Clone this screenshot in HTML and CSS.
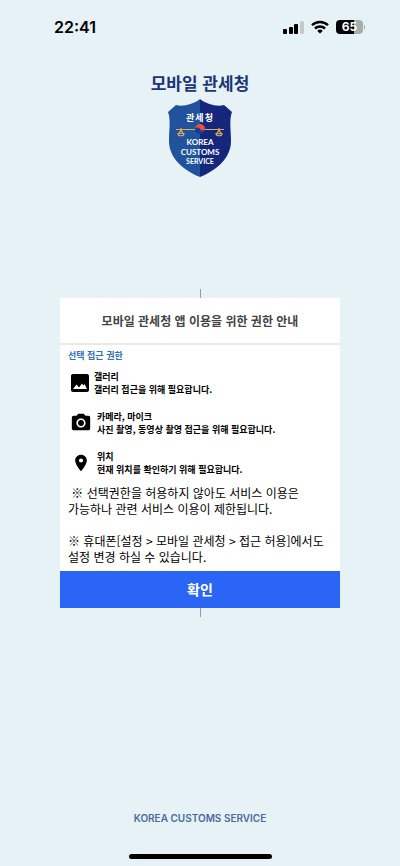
FILE: index.html
```
<!DOCTYPE html>
<html lang="ko">
<head>
  <meta charset="utf-8">
  <meta name="viewport" content="width=device-width, initial-scale=1">
  <title>모바일 관세청</title>
  <link rel="stylesheet" href="styles.css">
</head>
<body>
  <div class="status-bar">
    <span class="time">22:41</span>
    <div class="status-icons">
      <svg width="21" height="14" viewBox="0 0 21 14">
        <rect x="0" y="9" width="4" height="5" rx="1"/>
        <rect x="6" y="7" width="4" height="7" rx="1"/>
        <rect x="11" y="4" width="4" height="10" rx="1"/>
        <rect x="17" y="1" width="4" height="13" rx="1" fill="#c3cbcd"/>
      </svg>
      <svg width="18" height="14" viewBox="0 0 18 14">
        <g fill="none" stroke="#000" stroke-width="2.5">
          <path d="M1 5.2a11.6 11.6 0 0 1 16 0"/>
          <path d="M4 8.5a7.3 7.3 0 0 1 10 0"/>
        </g>
        <path d="M9 13.6 6.3 10.9a3.9 3.9 0 0 1 5.4 0z"/>
      </svg>
      <div class="battery">
        <span class="battery-level">65</span>
        <span class="battery-tip"></span>
      </div>
    </div>
  </div>

  <header class="brand">
    <h1 class="brand-name">모바일 관세청</h1>
    <svg class="emblem" width="64" height="78" viewBox="0 0 64 78">
      <path d="M32 0C26 5 15 8 8 6L0 13c3 8 1 17 1 29 0 17 14 29 31 36z" fill="#20539b"/>
      <path d="M32 0c6 5 17 8 24 6l8 7c-3 8-1 17-1 29 0 17-14 29-31 36z" fill="#14277d"/>
      <g fill="none" stroke="#e0aa5c" stroke-width="1.2">
        <path d="M8 30.500H56"/>
        <path d="M13 29v2l-2.500 4M13 31l2.500 4M51 29v2l-2.500 4M51 31l2.500 4"/>
      </g>
      <path d="M10 34.500h6c0 3-6 3-6 0zM48 34.500h6c0 3-6 3-6 0z" fill="#14408b" stroke="#e0aa5c" stroke-width="1.2"/>
      <circle cx="32" cy="30" r="5" fill="#173c91"/>
      <path d="M27 30a5 5 0 0 1 10 0c-1 2-4 2-5 0s-4-2-5 0z" fill="#ed5038"/>
      <g class="emblem-text">
        <text x="32" y="22" font-size="9" letter-spacing="1">관세청</text>
        <text x="32" y="46" font-size="8">KOREA</text>
        <text x="32" y="56" font-size="8">CUSTOMS</text>
        <text x="32" y="65" font-size="7">SERVICE</text>
      </g>
    </svg>
  </header>

  <main class="content">
    <section class="card">
      <h2 class="card-title">모바일 관세청 앱 이용을 위한 권한 안내</h2>
      <div class="card-body">
        <h3 class="section-title">선택 접근 권한</h3>
        <ul class="permissions">
          <li class="permission">
            <svg width="24" height="24" viewBox="0 0 24 24"><path d="M21 19V5c0-1.100-.9-2-2-2H5c-1.100 0-2 .9-2 2v14c0 1.100.9 2 2 2h14c1.100 0 2-.9 2-2zM5 18l3.500-4.500 2.500 3 3-4 1.500 2 1-1.500L19 18z"/></svg>
            <div>
              <strong>갤러리</strong>
              <p>갤러리 접근을 위해 필요합니다.</p>
            </div>
          </li>
          <li class="permission permission-wide">
            <svg width="22" height="22" viewBox="0 0 24 24"><circle cx="12" cy="12" r="3.200"/><path d="M9 2 7.170 4H4c-1.100 0-2 .9-2 2v12c0 1.100.9 2 2 2h16c1.100 0 2-.9 2-2V6c0-1.100-.9-2-2-2h-3.170L15 2H9zm3 15c-2.760 0-5-2.240-5-5s2.240-5 5-5 5 2.240 5 5-2.240 5-5 5z"/></svg>
            <div>
              <strong>카메라, 마이크</strong>
              <p>사진 촬영, 동영상 촬영 접근을 위해 필요합니다.</p>
            </div>
          </li>
          <li class="permission permission-wide">
            <svg width="20" height="20" viewBox="0 0 24 24"><path d="M12 2C8.130 2 5 5.130 5 9c0 5.250 7 13 7 13s7-7.750 7-13c0-3.870-3.130-7-7-7zm0 9.500a2.500 2.500 0 1 1 0-5 2.500 2.500 0 0 1 0 5z"/></svg>
            <div>
              <strong>위치</strong>
              <p>현재 위치를 확인하기 위해 필요합니다.</p>
            </div>
          </li>
        </ul>
        <div class="notes">
          <p>&nbsp;※ 선택권한을 허용하지 않아도 서비스 이용은<br>가능하나 관련 서비스 이용이 제한됩니다.</p>
          <p>※ 휴대폰[설정 &gt; 모바일 관세청 &gt; 접근 허용]에서도<br>설정 변경 하실 수 있습니다.</p>
        </div>
      </div>
      <button class="confirm" type="button">확인</button>
    </section>
  </main>

  <footer class="footer">
    <p class="footer-text">KOREA CUSTOMS SERVICE</p>
    <div class="home-bar"></div>
  </footer>
</body>
</html>
```
FILE: styles.css
```
* {
  box-sizing: border-box;
  margin: 0;
  padding: 0;
}

body {
  display: flex;
  flex-direction: column;
  min-height: 100vh;
  background: #e6f2f5;
  color: #000;
  font-family: "Noto Sans CJK KR", sans-serif;
}

.status-bar {
  display: flex;
  align-items: center;
  justify-content: space-between;
  height: 54px;
  padding: 0 35px 0 54px;
}

.time {
  font-family: Inter, sans-serif;
  font-size: 16px;
  font-weight: 600;
}

.status-icons {
  display: flex;
  align-items: center;
  gap: 7px;
}

.battery {
  display: flex;
  align-items: center;
  gap: 1px;
}

.battery-level {
  width: 27px;
  border-radius: 4px;
  background: linear-gradient(90deg, #000 65%, #a6adaf 65%);
  color: #fff;
  font: 700 12px/14px Inter, sans-serif;
  text-align: center;
}

.battery-tip {
  width: 1px;
  height: 4px;
  background: #a6adaf;
}

.brand {
  display: flex;
  flex-direction: column;
  align-items: center;
  gap: 3px;
  padding-top: 16px;
}

.brand-name {
  color: #1b3577;
  font-size: 17px;
  font-weight: 700;
  line-height: 26px;
}

.emblem-text {
  fill: #fff;
  font-family: Lato, "Noto Sans CJK KR", sans-serif;
  font-weight: 700;
  text-anchor: middle;
}

.content {
  display: flex;
  flex: 1;
  flex-direction: column;
  align-items: center;
  justify-content: center;
  padding: 0 60px 83px;
}

/* thin line showing above and below the card */
.content::before,
.content::after {
  content: "";
  width: 1px;
  height: 9px;
  background: #8a9cc2;
}

.card {
  width: 100%;
  max-width: 480px;
  background: #fff;
}

.card-title {
  border-bottom: 2px solid #ebe9e6;
  color: #444;
  font-size: 12px;
  font-weight: 700;
  line-height: 45px;
  text-align: center;
}

.card-body {
  padding: 4px 8px 6px;
}

.section-title {
  color: #3272b8;
  font-size: 9px;
  font-weight: 700;
  line-height: 13px;
}

.permissions {
  padding: 8px 0;
  list-style: none;
}

.permission {
  display: flex;
  align-items: center;
  gap: 2px;
  height: 27px;
  font-size: 9px;
  font-weight: 700;
  line-height: 13px;
}

.permission + .permission {
  margin-top: 13px;
}

.permission strong {
  display: block;
  font-weight: 700;
}

.permission-wide {
  gap: 3px;
}

.permission-wide svg {
  width: 26px;
}

.notes {
  display: grid;
  gap: 16px;
  font-size: 12px;
  line-height: 16px;
}

.confirm {
  display: block;
  width: 100%;
  border: 0;
  background: #2a65f6;
  color: #fff;
  font: inherit;
  font-size: 14px;
  font-weight: 700;
  line-height: 37px;
  cursor: pointer;
}

.footer {
  display: flex;
  flex-direction: column;
  align-items: center;
  gap: 29px;
  padding-bottom: 7px;
}

.footer-text {
  color: #4b6a9f;
  font-family: Inter, sans-serif;
  font-size: 10px;
  font-weight: 600;
  line-height: 14px;
}

.home-bar {
  width: 143px;
  height: 5px;
  border-radius: 3px;
  background: #000;
}
```
